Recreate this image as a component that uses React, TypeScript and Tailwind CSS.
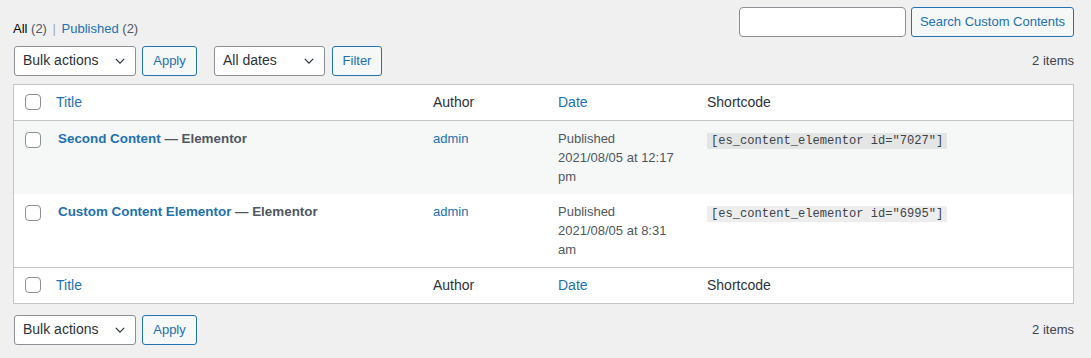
import React from 'react';

const font = { fontFamily: '"Liberation Sans", Arial, sans-serif' };

const Chevron = () => (
  <svg width="14" height="14" viewBox="0 0 20 20" className="absolute right-[8px] top-1/2 -translate-y-1/2">
    <path d="M4 7 L10 13 L16 7" fill="none" stroke="#2c3338" strokeWidth="1.8" />
  </svg>
);

const Select = ({ label, width }: { label: string; width: string }) => (
  <div className={`relative ${width} h-[30px] bg-white border border-[#8c8f94] rounded-[3px] flex items-center pl-[8px] text-[14px] text-[#2c3338]`}>
    {label}
    <Chevron />
  </div>
);

const Button = ({ children, className = '' }: { children: React.ReactNode; className?: string }) => (
  <button className={`h-[30px] px-0 whitespace-nowrap bg-[#f6f7f7] border border-[#2271b1] rounded-[3px] text-[13px] text-[#2271b1] ${className}`}>
    {children}
  </button>
);

const Check = () => <div className="w-[16px] h-[16px] bg-white border border-[#8c8f94] rounded-[4px]" />;

const cols = 'grid grid-cols-[32px_377px_125px_149px_1fr]';

const HeadRow = ({ top }: { top?: boolean }) => (
  <div className={`${cols} h-[36px] items-center text-[14px] text-[#2c3338] ${top ? 'border-b' : 'border-t'} border-[#c3c4c7] bg-white`}>
    <div className="pl-[11px] flex"><Check /></div>
    <div className="pl-[10px] text-[#2271b1]">Title</div>
    <div className="pl-[10px]">Author</div>
    <div className="pl-[10px] text-[#2271b1]">Date</div>
    <div className="pl-[10px]">Shortcode</div>
  </div>
);

const rows = [
  { title: 'Second Content', time: '12:17', ampm: 'pm', id: '7027', bg: 'bg-[#f6f7f7]' },
  { title: 'Custom Content Elementor', time: '8:31', ampm: 'am', id: '6995', bg: 'bg-white' },
];

export default function App() {
  return (
    <div className="w-[1091px] h-[358px] bg-[#f0f0f1] text-[13px] text-[#3c434a] pl-[13px] pr-[17px] pt-[7px]" style={font}>
      <div className="flex justify-between items-start">
        <div className="pt-[12px] text-[13px] text-[#50575e]">
          <span className="text-black">All</span> (2) <span className="text-[#a7aaad] px-[2px]">|</span>{' '}
          <span className="text-[#2271b1]">Published</span> (2)
        </div>
        <div className="flex gap-[5px]">
          <div className="w-[167px] h-[30px] bg-white border border-[#8c8f94] rounded-[4px]" />
          <Button className="w-[163px]">Search Custom Contents</Button>
        </div>
      </div>

      <div className="flex items-center mt-[7px] h-[30px] pl-[1px]">
        <Select label="Bulk actions" width="w-[122px]" />
        <Button className="ml-[6px] w-[55px]">Apply</Button>
        <div className="ml-[17px]"><Select label="All dates" width="w-[111px]" /></div>
        <Button className="ml-[7px] w-[50px]">Filter</Button>
        <div className="ml-auto text-[13px] text-[#3c434a]">2 items</div>
      </div>

      <div className="mt-[8px] border border-[#c3c4c7] bg-white">
        <HeadRow top />
        {rows.map((r) => (
          <div key={r.id} className={`${cols} ${r.bg} h-[73px] pt-[8px] text-[13px] leading-[19px] items-start`}>
            <div className="pl-[11px] pt-[3px] flex"><Check /></div>
            <div className="pl-[12px] text-[13.4px] text-[#50575e] font-bold">
              <span className="text-[#2271b1]">{r.title}</span> — Elementor
            </div>
            <div className="pl-[10px] text-[#2271b1]">admin</div>
            <div className="pl-[10px] text-[#50575e]">
              Published
              <br />
              2021/08/05 at {r.time}
              <br />
              {r.ampm}
            </div>
            <div className="pl-[10px] pt-[1px]">
              <code className="bg-[rgba(0,0,0,0.07)] px-[4px] py-[1px] text-[12.1px] text-[#3c434a]" style={{ fontFamily: '"Liberation Mono", monospace' }}>
                [es_content_elementor id="{r.id}"]
              </code>
            </div>
          </div>
        ))}
        <HeadRow />
      </div>

      <div className="flex items-center mt-[11px] h-[30px] pl-[1px]">
        <Select label="Bulk actions" width="w-[122px]" />
        <Button className="ml-[6px] w-[55px]">Apply</Button>
        <div className="ml-auto text-[13px] text-[#3c434a]">2 items</div>
      </div>
    </div>
  );
}
